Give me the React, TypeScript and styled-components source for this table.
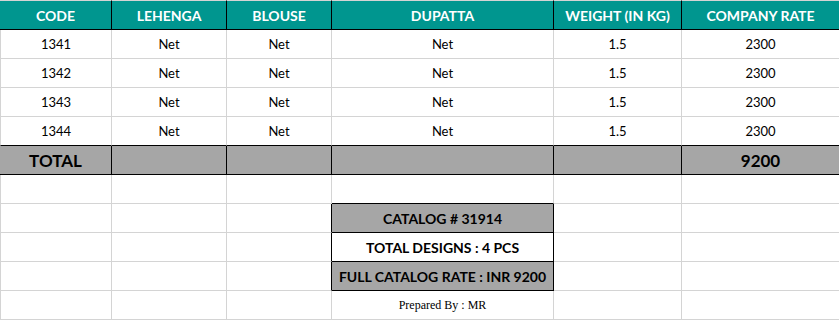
import React from 'react';
import styled, { createGlobalStyle, css } from 'styled-components';

const GRID = '#d4d4d4';
const INK = '#000000';
const TEAL = '#00968f';
const SHADE = '#a6a6a6';

const GlobalStyle = createGlobalStyle`
  html, body {
    margin: 0;
    padding: 0;
    background: #ffffff;
    overflow: hidden;
  }
  body {
    font-family: Lato, "Open Sans", sans-serif;
    color: #000;
  }
`;

const Sheet = styled.div`
  display: grid;
  width: 839px;
  grid-template-columns: 112px 115px 105px 222px 128px 1fr;
  grid-template-rows: 30px repeat(10, 29px);
`;

type Edge = { $first?: boolean; $last?: boolean; $right?: string; $bottom?: string };

const Cell = styled.div<Edge>`
  box-sizing: border-box;
  display: flex;
  align-items: center;
  justify-content: center;
  white-space: nowrap;
  overflow: hidden;
  border-right: 1px solid ${(p) => p.$right || GRID};
  border-bottom: 1px solid ${(p) => p.$bottom || GRID};
  ${(p) => p.$first && css`border-left: 1px solid ${GRID};`}
  ${(p) => p.$last && css`border-right: none;`}
`;

const HeadCell = styled(Cell)`
  background: ${TEAL};
  color: #ffffff;
  font-weight: 700;
  font-size: 14px;
  border-top: 1px solid ${GRID};
  border-left: none;
`;

const DataCell = styled(Cell)`
  font-size: 13px;
`;

const TotalCell = styled(Cell)`
  background: ${SHADE};
  font-weight: 700;
  font-size: 17px;
  border-left: none;
`;

const InfoCell = styled(Cell)<{ $shaded?: boolean }>`
  background: ${(p) => (p.$shaded ? SHADE : '#ffffff')};
  font-weight: 700;
  font-size: 14px;
`;

const NoteCell = styled(Cell)`
  font-family: "Liberation Serif", "Times New Roman", serif;
  font-size: 12px;
`;

const columns = ['CODE', 'LEHENGA', 'BLOUSE', 'DUPATTA', 'WEIGHT (IN KG)', 'COMPANY RATE'];

const designs = [
  ['1341', 'Net', 'Net', 'Net', '1.5', '2300'],
  ['1342', 'Net', 'Net', 'Net', '1.5', '2300'],
  ['1343', 'Net', 'Net', 'Net', '1.5', '2300'],
  ['1344', 'Net', 'Net', 'Net', '1.5', '2300'],
];

const totals = ['TOTAL', '', '', '', '', '9200'];

const summary = [
  { text: 'CATALOG # 31914', shaded: true },
  { text: 'TOTAL DESIGNS : 4 PCS', shaded: false },
  { text: 'FULL CATALOG RATE : INR 9200', shaded: true },
];

const App = () => (
  <>
    <GlobalStyle />
    <Sheet>
      {columns.map((c, i) => (
        <HeadCell key={c} $right={INK} $bottom={INK} $last={i === 5}>
          {c}
        </HeadCell>
      ))}

      {designs.map((row, r) =>
        row.map((v, i) => (
          <DataCell
            key={`${r}-${i}`}
            $first={i === 0}
            $last={i === 5}
            $bottom={r === designs.length - 1 ? INK : GRID}
          >
            {v}
          </DataCell>
        ))
      )}

      {totals.map((v, i) => (
        <TotalCell key={`t-${i}`} $right={INK} $bottom={INK} $last={i === 5}>
          {v}
        </TotalCell>
      ))}

      {/* spacer row above the catalog box */}
      {columns.map((c, i) => (
        <Cell key={`s-${c}`} $first={i === 0} $last={i === 5} $bottom={i === 3 ? INK : GRID} />
      ))}

      {summary.map((s) =>
        columns.map((c, i) =>
          i === 3 ? (
            <InfoCell key={`${s.text}-${c}`} $shaded={s.shaded} $right={INK} $bottom={INK}>
              {s.text}
            </InfoCell>
          ) : (
            <Cell key={`${s.text}-${c}`} $first={i === 0} $last={i === 5} $right={i === 2 ? INK : GRID} />
          )
        )
      )}

      {columns.map((c, i) =>
        i === 3 ? (
          <NoteCell key={`n-${c}`}>Prepared By : MR</NoteCell>
        ) : (
          <Cell key={`n-${c}`} $first={i === 0} $last={i === 5} />
        )
      )}
    </Sheet>
  </>
);

export default App;
